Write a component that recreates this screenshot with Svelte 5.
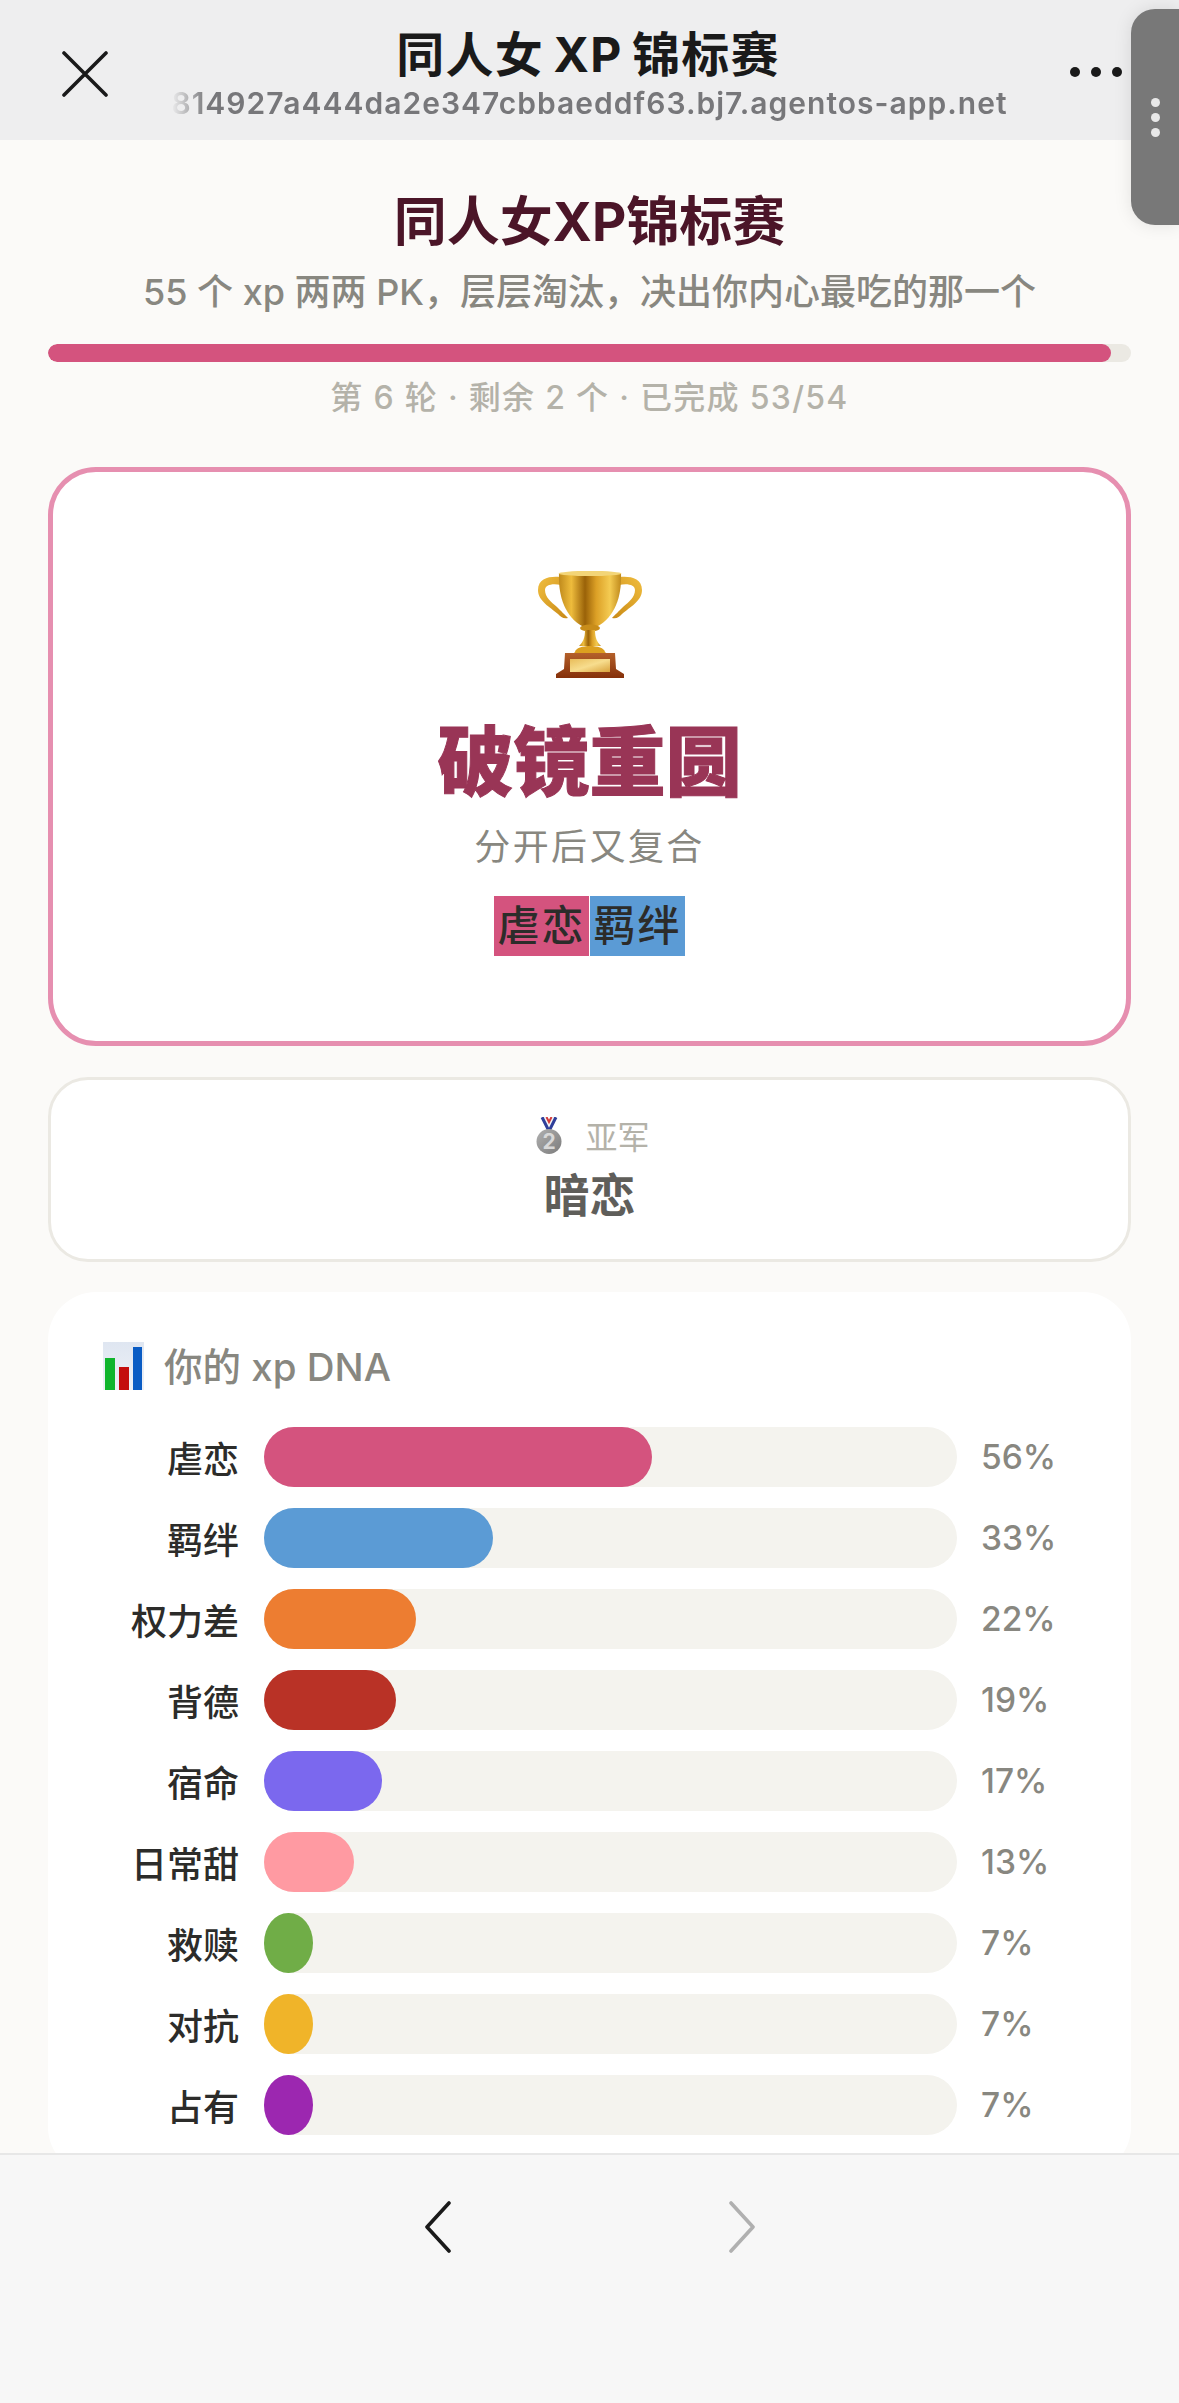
<script>
	const bars = [
		{ name: '虐恋', pct: 56, color: '#d4537e' },
		{ name: '羁绊', pct: 33, color: '#5b9bd5' },
		{ name: '权力差', pct: 22, color: '#ed7d31' },
		{ name: '背德', pct: 19, color: '#b93226' },
		{ name: '宿命', pct: 17, color: '#7b68ee' },
		{ name: '日常甜', pct: 13, color: '#ff9aa2' },
		{ name: '救赎', pct: 7, color: '#70ad47' },
		{ name: '对抗', pct: 7, color: '#f0b429' },
		{ name: '占有', pct: 7, color: '#9c27b0' }
	];
</script>

<div class="screen">
	<header class="topbar">
		<svg class="close" width="46" height="46" viewBox="0 0 46 46" fill="none" stroke="#1a1a1a" stroke-width="3.6" stroke-linecap="round">
			<path d="M2 2 L44 44 M44 2 L2 44" />
		</svg>
		<div class="topbar-text">
			<div class="topbar-title">同人女 XP 锦标赛</div>
			<div class="topbar-url">814927a444da2e347cbbaeddf63.bj7.agentos-app.net</div>
		</div>
		<div class="more"><i></i><i></i><i></i></div>
	</header>

	<main class="page">
		<h1>同人女XP锦标赛</h1>
		<p class="intro">55 个 xp 两两 PK，层层淘汰，决出你内心最吃的那一个</p>
		<div class="progress"><div class="progress-fill" style="width: 98.15%"></div></div>
		<p class="status">第 6 轮 · 剩余 2 个 · 已完成 53/54</p>

		<section class="winner">
			<svg class="trophy" width="104" height="108" viewBox="0 0 104 108" fill="none">
				<defs>
					<linearGradient id="cup" x1="0" x2="1" y1="0" y2="0">
						<stop offset="0" stop-color="#c08a1c" />
						<stop offset="0.2" stop-color="#eebc3c" />
						<stop offset="0.42" stop-color="#9a6208" />
						<stop offset="0.6" stop-color="#dca026" />
						<stop offset="0.82" stop-color="#f4cb52" />
						<stop offset="1" stop-color="#c08a1c" />
					</linearGradient>
					<linearGradient id="handle" x1="0" x2="1" y1="0" y2="1">
						<stop offset="0" stop-color="#f0bd3e" />
						<stop offset="1" stop-color="#c98a16" />
					</linearGradient>
					<linearGradient id="plaque" x1="0" x2="1" y1="0" y2="1">
						<stop offset="0" stop-color="#e9bd5a" />
						<stop offset="0.5" stop-color="#f7dd8e" />
						<stop offset="1" stop-color="#d9a23c" />
					</linearGradient>
					<linearGradient id="plinth" x1="0" x2="0" y1="0" y2="1">
						<stop offset="0" stop-color="#b4602a" />
						<stop offset="1" stop-color="#85300a" />
					</linearGradient>
					<path id="ear" d="M22 7 C12 6 0 8 0 20 C0 31 12 37 20 44 C23 47 25 49 30 48 C26 44 24 42 19 37 C13 32 7 27 7 20 C7 15 14 13 23 15 Z" />
				</defs>
				<use href="#ear" fill="url(#handle)" />
				<use href="#ear" fill="url(#handle)" transform="translate(104 0) scale(-1 1)" />
				<path d="M21 3 L83 3 C84 28 76 47 60 56 L44 56 C28 47 20 28 21 3 Z" fill="url(#cup)" />
				<ellipse cx="52" cy="3.5" rx="31.5" ry="2.6" fill="#f3d577" />
				<ellipse cx="52" cy="58" rx="10" ry="3.6" fill="#c98d1a" />
				<path d="M47 60 L57 60 C57 68 59 72 63 76 L41 76 C45 72 47 68 47 60 Z" fill="url(#cup)" />
				<path d="M37 82 C38 74 66 74 67 82 L69 84 L35 84 Z" fill="#dca020" />
				<path d="M27 83 L77 83 L78 99 L86 104 L86 108 L18 108 L18 104 L26 99 Z" fill="url(#plinth)" />
				<rect x="32" y="89" width="40" height="13" fill="url(#plaque)" />
			</svg>
			<div class="winner-name">破镜重圆</div>
			<div class="winner-desc">分开后又复合</div>
			<div class="tags">
				<span class="tag pink">虐恋</span><span class="tag blue">羁绊</span>
			</div>
		</section>

		<section class="runner">
			<div class="runner-label">
				<svg width="26" height="37" viewBox="0 0 26 37" fill="none">
					<defs>
						<linearGradient id="medal" x1="0" x2="1" y1="0" y2="1">
							<stop offset="0" stop-color="#b0b0b0" />
							<stop offset="1" stop-color="#7c7c7c" />
						</linearGradient>
					</defs>
					<path d="M6.5 0 L13 13 L19.5 0" stroke="#2f3f9a" stroke-width="4" />
					<path d="M8.5 0 L13 9 L17.5 0" stroke="#f4f4f4" stroke-width="1.6" />
					<path d="M10.5 0 L13 5 L15.5 0" stroke="#d33a3a" stroke-width="2" />
					<circle cx="13" cy="24.5" r="12.5" fill="url(#medal)" />
					<text x="13" y="32" class="medal-num">2</text>
				</svg>
				<span>亚军</span>
			</div>
			<div class="runner-name">暗恋</div>
		</section>

		<section class="dna">
			<div class="dna-head">
				<svg width="41" height="48" viewBox="0 0 41 48">
					<defs>
						<linearGradient id="chartbg" x1="0" x2="0" y1="0" y2="1">
							<stop offset="0" stop-color="#dfe6f1" />
							<stop offset="1" stop-color="#eef1f6" />
						</linearGradient>
					</defs>
					<rect width="41" height="48" fill="url(#chartbg)" />
					<rect x="2" y="16" width="10" height="32" fill="#10b52c" />
					<rect x="16" y="25" width="10" height="23" fill="#c40d0d" />
					<rect x="30" y="5" width="9" height="43" fill="#0a5cc4" />
				</svg>
				<span>你的 xp DNA</span>
			</div>
			<div class="rows">
				{#each bars as bar}
					<div class="row">
						<span class="row-name">{bar.name}</span>
						<div class="track">
							<div class="fill" style="width: {bar.pct}%; background: {bar.color}"></div>
						</div>
						<span class="row-pct">{bar.pct}%</span>
					</div>
				{/each}
			</div>
		</section>
	</main>

	<footer class="bottombar">
		<svg width="28" height="52" viewBox="0 0 28 52" fill="none" stroke="#1a1a1a" stroke-width="3.6" stroke-linecap="round" stroke-linejoin="round">
			<path d="M25 2 L3 26 L25 50" />
		</svg>
		<svg width="28" height="52" viewBox="0 0 28 52" fill="none" stroke="#b0b0b0" stroke-width="3.6" stroke-linecap="round" stroke-linejoin="round">
			<path d="M3 2 L25 26 L3 50" />
		</svg>
	</footer>

	<div class="handle"><i></i><i></i><i></i></div>
</div>

<style>
	:global(body) {
		margin: 0;
	}

	.screen {
		position: relative;
		display: flex;
		flex-direction: column;
		width: 1179px;
		height: 2403px;
		overflow: hidden;
		background: #fbfaf8;
		font-family: Inter, 'Noto Sans CJK SC', sans-serif;
	}

	.topbar {
		flex: none;
		display: flex;
		justify-content: center;
		position: relative;
		height: 140px;
		background: #eeeeef;
	}

	.close {
		position: absolute;
		left: 62px;
		top: 51px;
	}

	.topbar-text {
		display: flex;
		flex-direction: column;
		align-items: center;
		width: 838px;
		padding-top: 24px;
	}

	.topbar-title {
		font-size: 48px;
		font-weight: 700;
		line-height: 62px;
		color: #1a1a1a;
		letter-spacing: 1.2px;
		word-spacing: -3px;
		white-space: nowrap;
		margin-left: -3px;
	}

	.topbar-url {
		margin-top: -2px;
		font-size: 30px;
		font-weight: 600;
		line-height: 38px;
		color: #77777a;
		letter-spacing: 1.02px;
		white-space: nowrap;
		-webkit-mask-image: linear-gradient(90deg, transparent 0, #000 36px);
		mask-image: linear-gradient(90deg, transparent 0, #000 36px);
	}

	.more {
		position: absolute;
		left: 1070px;
		top: 67px;
		display: flex;
		gap: 11px;
	}

	.more i {
		width: 10px;
		height: 10px;
		border-radius: 50%;
		background: #1a1a1a;
	}

	.page {
		flex: 1;
		min-height: 0;
		overflow: hidden;
		padding: 47px 48px 0;
	}

	h1 {
		margin: 0;
		text-align: center;
		font-size: 53px;
		font-weight: 700;
		line-height: 70px;
		color: #4b1528;
	}

	.intro {
		margin: 10px 0 0;
		text-align: center;
		font-size: 36px;
		font-weight: 500;
		line-height: 50px;
		color: #888780;
	}

	.progress {
		height: 18px;
		margin-top: 27px;
		border-radius: 9px;
		background: #ebe9e3;
		overflow: hidden;
	}

	.progress-fill {
		height: 100%;
		border-radius: 9px;
		background: #d4537e;
	}

	.status {
		margin: 14px 0 0;
		text-align: center;
		font-size: 32px;
		font-weight: 500;
		line-height: 44px;
		color: #b4b2a9;
		letter-spacing: 1.3px;
	}

	.winner {
		box-sizing: border-box;
		display: flex;
		flex-direction: column;
		align-items: center;
		height: 579px;
		margin-top: 47px;
		padding-top: 98px;
		border: 5px solid #e68fb0;
		border-radius: 48px;
		background: #fff;
	}

	.trophy {
		display: block;
	}

	.winner-name {
		margin-top: 36px;
		font-size: 76px;
		font-weight: 900;
		line-height: 96px;
		color: #993556;
		-webkit-text-stroke: 1px #993556;
	}

	.winner-desc {
		margin-top: 10px;
		font-size: 36px;
		line-height: 54px;
		letter-spacing: 2.4px;
		color: #888780;
	}

	.tags {
		display: flex;
		gap: 1px;
		margin-top: 22px;
	}

	.tag {
		box-sizing: border-box;
		width: 95px;
		height: 60px;
		font-size: 42px;
		font-weight: 500;
		line-height: 60px;
		text-align: center;
		letter-spacing: 2px;
		color: #2c2c2a;
	}

	.pink {
		background: #d4537e;
	}

	.blue {
		background: #5b9bd5;
	}

	.runner {
		box-sizing: border-box;
		display: flex;
		flex-direction: column;
		align-items: center;
		height: 185px;
		margin-top: 31px;
		padding-top: 35px;
		border: 3px solid #ebe9e3;
		border-radius: 40px;
		background: #fff;
	}

	.runner-label {
		display: flex;
		align-items: center;
		gap: 23px;
		height: 40px;
		padding-left: 7px;
		font-size: 32px;
		color: #b4b2a9;
	}

	.medal-num {
		font-size: 21px;
		font-weight: 700;
		text-anchor: middle;
		fill: #d8d8d8;
	}

	.runner-name {
		margin-top: 7px;
		font-size: 46px;
		font-weight: 700;
		line-height: 66px;
		color: #5f5e5a;
	}

	.dna {
		margin-top: 30px;
		padding: 49px 55px 40px;
		border-radius: 48px;
		background: #fff;
	}

	.dna-head {
		display: flex;
		align-items: center;
		gap: 20px;
		height: 49px;
		font-size: 38.5px;
		font-weight: 500;
		color: #888780;
	}

	.dna-head span {
		padding-bottom: 3px;
	}

	.rows {
		display: flex;
		flex-direction: column;
		gap: 21px;
		margin-top: 37px;
	}

	.row {
		display: flex;
		align-items: center;
		height: 60px;
	}

	.row-name {
		flex: none;
		width: 136px;
		text-align: right;
		font-size: 36px;
		font-weight: 500;
		color: #2c2c2a;
	}

	.track {
		flex: none;
		width: 693px;
		height: 60px;
		margin-left: 25px;
		border-radius: 30px;
		background: #f4f3ee;
	}

	.fill {
		height: 100%;
		border-radius: min(30px, 50%) / 30px;
	}

	.row-pct {
		margin-left: 24px;
		font-size: 33.5px;
		font-weight: 500;
		color: #888780;
		white-space: nowrap;
	}

	.bottombar {
		flex: none;
		box-sizing: border-box;
		display: flex;
		justify-content: center;
		gap: 276px;
		height: 250px;
		padding-top: 46px;
		border-top: 2px solid #e7e7e7;
		background: #f7f7f7;
	}

	.handle {
		position: absolute;
		left: 1131px;
		top: 9px;
		display: flex;
		flex-direction: column;
		align-items: center;
		justify-content: center;
		gap: 6px;
		width: 48px;
		height: 216px;
		border-radius: 24px 0 0 24px;
		background: #787878;
		box-shadow: 0 0 18px rgba(0, 0, 0, 0.1);
	}

	.handle i {
		width: 9px;
		height: 9px;
		border-radius: 50%;
		background: #e8e8e8;
	}
</style>
